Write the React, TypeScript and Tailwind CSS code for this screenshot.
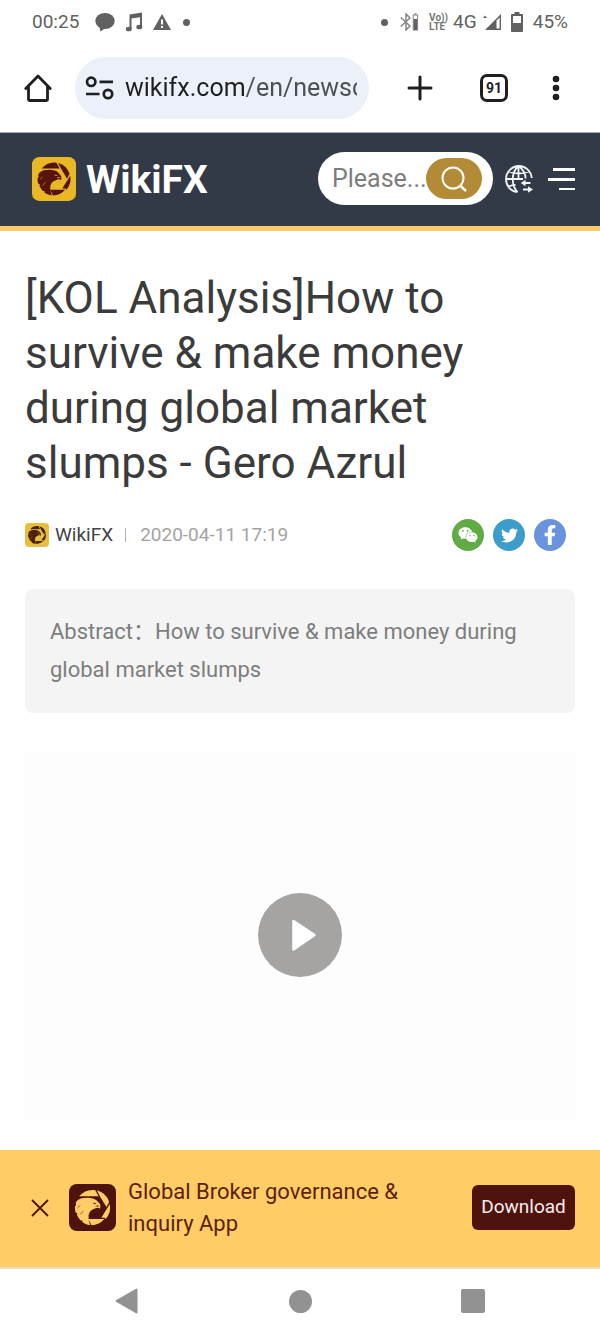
import { FaFacebookF, FaTwitter, FaWeixin } from "react-icons/fa";

type LogoProps = { className?: string; box: string; mark: string; label?: string };

function EagleLogo({ className, box, mark, label }: LogoProps) {
  return (
    <svg viewBox="0 0 48 48" className={className} role="img" aria-label={label ?? "WikiFX"}>
      <rect width="48" height="48" rx="8" fill={box} />
      <g fill={mark}>
        <path d="M10.5 12.6 A18 18 0 0 1 26.6 6.2 L30.2 12.6 Z" />
        <path d="M28.4 6.5 A18 18 0 0 1 41 18.4 L38.3 23.6 L32.4 14 Z" />
        <path d="M41.7 20.4 A18 18 0 0 1 37.4 35.8 L36.4 34.4 H33 Z" />
        <path d="M19.5 35.8 H36.2 A18 18 0 0 1 23 42 Z" />
        <path d="M7.5 17.8 C10 14.8 14 13.8 20 14 C25 14.2 28.6 16 30.2 19 C32 20 32.7 22.2 31.6 25.4 C30.4 23.9 28.5 24.1 26.6 25 C23 26 20.4 28.5 20 32 C19.8 36 20.4 39.5 21.8 42 C18 41.6 15.4 40.2 13.6 38.8 L13.6 37 L11.8 37.2 C9.8 35 8.7 33 8 31.2 L8.8 29.8 L7 29.4 C6 26.8 5.9 24.6 6.2 22.6 L7.6 21.2 L6.7 20.8 Z" />
      </g>
      <path d="M24.2 19 L28.4 19.8 L25.8 20.6 Z M26.6 22.7 C28 21.8 29.8 21.9 31.4 22.5 L28.6 23.1 Z" fill={box} />
      <path d="M14.6 27.5 L11.6 31.2 M11.6 21.8 L8.8 24.2" stroke={box} strokeWidth="0.6" fill="none" />
    </svg>
  );
}

function StatusBar() {
  return (
    <div className="flex h-11 items-center justify-between pr-8 pl-8 text-[19px] text-[#616161]">
      <div className="flex items-center">
        <span>00:25</span>
        <svg viewBox="0 0 20 20" className="ml-4 size-5" fill="currentColor" aria-hidden="true">
          <ellipse cx="10" cy="9" rx="9.7" ry="8" />
          <path d="M4 13 L5.5 19.5 L12 15 Z" />
        </svg>
        <svg viewBox="0 0 18 20" className="ml-2.5 h-5 w-[18px]" fill="currentColor" aria-hidden="true">
          <path d="M4.5 2.5 L17 0.5 V15 H15 V5.2 L6.5 6.6 V17 H4.5 Z" />
          <ellipse cx="3.8" cy="17" rx="3" ry="2.3" />
          <ellipse cx="14.3" cy="15" rx="3" ry="2.3" />
        </svg>
        <svg viewBox="0 0 18 16" className="ml-2.5 h-4 w-[18px]" fill="currentColor" aria-hidden="true">
          <path d="M9 0 L18 16 H0 Z" />
          <path d="M9 5.5 V10.5 M9 12 V14" stroke="#fff" strokeWidth="2" />
        </svg>
        <span className="ml-3 size-[7px] rounded-full bg-[#616161]" />
      </div>
      <div className="flex items-center">
        <span className="mr-3 size-[7px] rounded-full bg-[#616161]" />
        <svg viewBox="0 0 19 18" className="h-[18px] w-[19px]" fill="none" stroke="#858585" strokeWidth="1.5" aria-hidden="true">
          <path d="M0.8 4.5 L10 13 L6 17 V1 L10 5 L0.8 13.5" />
          <rect x="13.2" y="2" width="4.4" height="15" strokeWidth="1" />
          <path d="M15.4 6 V17" stroke="#616161" strokeWidth="3.6" />
          <path d="M14.5 1 H16.5" />
        </svg>
        <span className="ml-2.5 flex w-[18px] flex-col text-[10px] leading-[9px] font-bold text-[#777]">
          <span>Vo))</span>
          <span>LTE</span>
        </span>
        <span className="ml-1.5 text-[19px]">4G</span>
        <svg viewBox="0 0 18 16" className="ml-1.5 h-4 w-[18px]" fill="currentColor" aria-hidden="true">
          <path d="M18 0 V16 H2 Z" />
          <path d="M13.5 6.4 L16.6 3.4 V14.6 H13.5 Z" fill="#fff" />
          <path d="M0 4 L2 1.5 L4 4 Z" />
        </svg>
        <svg viewBox="0 0 12 20" className="ml-2.5 h-5 w-3" fill="currentColor" aria-hidden="true">
          <path d="M3.5 0 H8.5 V2 H11 Q12 2 12 3 V19 Q12 20 11 20 H1 Q0 20 0 19 V3 Q0 2 1 2 H3.5 Z" />
          <rect x="2" y="4" width="8" height="7" fill="#fff" />
        </svg>
        <span className="ml-2.5">45%</span>
      </div>
    </div>
  );
}

function BrowserBar() {
  return (
    <div className="flex h-[89px] items-center border-b border-[#a9adb3] pr-[39px] pl-6 text-[#1f1f1f]">
      <button aria-label="Home">
        <svg viewBox="0 0 28 28" className="size-7" fill="none" stroke="currentColor" strokeWidth="2.8" strokeLinejoin="round" strokeLinecap="round">
          <path d="M1.8 14.5 L14 2 L26.2 14.5 M4.5 12.5 V25.5 Q4.5 26.5 5.5 26.5 H22.5 Q23.5 26.5 23.5 25.5 V12.5" />
        </svg>
      </button>
      <div className="ml-[23px] flex h-[62px] min-w-0 flex-1 items-center rounded-full bg-[#ebf0f9] pr-3 pl-2.5">
        <svg viewBox="0 0 29 24" className="h-6 w-[29px] shrink-0" fill="none" stroke="currentColor" strokeWidth="2.7" aria-hidden="true">
          <circle cx="6.2" cy="5.8" r="4.2" />
          <path d="M14.5 5.8 H28 M1 18 H14.5" />
          <circle cx="23" cy="18" r="4.2" />
        </svg>
        <input
          aria-label="Web address"
          defaultValue="wikifx.com/en/newsc"
          className="ml-[11px] w-0 min-w-0 flex-1 bg-[linear-gradient(to_right,#1f1f1f_120px,#4b4f54_120px)] bg-clip-text text-[25px] text-transparent outline-none"
        />
      </div>
      <button aria-label="New tab" className="ml-[38px]">
        <svg viewBox="0 0 26 26" className="size-[26px]" stroke="currentColor" strokeWidth="3" strokeLinecap="round">
          <path d="M13 2 V24 M2 13 H24" />
        </svg>
      </button>
      <button aria-label="Open tabs" className="ml-[47px] flex size-7 items-center justify-center rounded-[7px] border-3 border-[#1f1f1f] text-sm leading-none font-bold">
        91
      </button>
      <button aria-label="Menu" className="ml-[43px]">
        <svg viewBox="0 0 10 28" className="h-7 w-2.5" fill="currentColor">
          <circle cx="5" cy="5" r="3.3" />
          <circle cx="5" cy="14" r="3.3" />
          <circle cx="5" cy="23" r="3.3" />
        </svg>
      </button>
    </div>
  );
}

function SiteHeader() {
  return (
    <header className="flex h-[98px] items-center border-b-5 border-[#fecb66] bg-[#323a48] pr-[25px] pb-0.5 pl-8">
      <a href="#home" className="flex items-center text-white">
        <EagleLogo className="size-11" box="#eab725" mark="#571509" />
        <span className="ml-2.5 pt-1 text-[39px] leading-none font-bold">WikiFX</span>
      </a>
      <form className="ml-auto flex h-[53px] w-[175px] items-center rounded-full bg-white pr-[11px] pl-3.5" onSubmit={(e) => e.preventDefault()}>
        <input aria-label="Search" placeholder="Please..." className="w-0 min-w-0 flex-1 text-[25px] text-[#757575] outline-none placeholder:text-[#7d7d7d]" />
        <button aria-label="Submit search" className="flex h-[41px] w-14 items-center justify-center rounded-full bg-[#b38a35]">
          <svg viewBox="0 0 26 26" className="size-[26px]" fill="none" stroke="#fff" strokeWidth="2">
            <circle cx="12" cy="12" r="10.5" />
            <path d="M19 19.5 L25 25" strokeWidth="2.4" />
          </svg>
        </button>
      </form>
      <button aria-label="Language" className="ml-3">
        <svg viewBox="0 0 28 28" className="size-7" fill="none" stroke="#f2f3f5" strokeWidth="1.8">
          <path d="M12.5 27 C5 26 1 20.5 1 14 C1 7 7 1 14 1 C20.5 1 26 6 26.8 13 M12.5 27 C6 20 6 7.5 13.5 1 C18.5 4.5 20.5 9 20.6 13.5 M13.5 1 V14 M3.6 6.5 Q14 10.5 24 6.5 M1 14 H18 M3.5 21.5 Q7 20 10.5 20" />
          <path d="M25.5 18 H19 M18 24.5 H24" strokeWidth="2" />
          <path d="M20.5 14.8 V21.2 L15.8 18 Z M23 21.3 V27.7 L28 24.5 Z" fill="#f2f3f5" stroke="none" />
        </svg>
      </button>
      <button aria-label="Site menu" className="ml-[15px] flex w-[27px] flex-col items-end gap-[7px]">
        <span className="h-[3px] w-[22px] bg-white" />
        <span className="h-[3px] w-full bg-white" />
        <span className="h-[2px] w-4 bg-white" />
      </button>
    </header>
  );
}

function Article() {
  return (
    <main className="flex-1 px-[25px] pt-10">
      <h1 className="text-[44px] leading-[55px] text-[#3b3b3b]">
        [KOL Analysis]How to survive &amp; make money during global market slumps - Gero Azrul
      </h1>
      <div className="mt-[26px] flex h-9 items-center pr-[9px] text-[19px]">
        <EagleLogo className="size-6" box="#e8bf3d" mark="#4b2308" />
        <span className="ml-1.5 text-[#444]">WikiFX</span>
        <span className="ml-3 h-3.5 w-px bg-[#b0b0b0]" />
        <time className="ml-3.5 text-[#a3a3a3]">2020-04-11 17:19</time>
        <div className="ml-auto flex gap-[9px] text-white">
          <a href="#wechat" aria-label="Share on WeChat" className="flex size-8 items-center justify-center rounded-full bg-[#5eac43]">
            <FaWeixin className="size-5" />
          </a>
          <a href="#twitter" aria-label="Share on Twitter" className="flex size-8 items-center justify-center rounded-full bg-[#3c9cca]">
            <FaTwitter className="size-[17px]" />
          </a>
          <a href="#facebook" aria-label="Share on Facebook" className="flex size-8 items-center justify-center rounded-full bg-[#6993dc]">
            <FaFacebookF className="size-5" />
          </a>
        </div>
      </div>
      <p className="mt-9 rounded-lg bg-[#f4f4f4] px-[25px] py-6 text-[22px] leading-[38px] text-[#7d7d7d]">
        Abstract：How to survive &amp; make money during global market slumps
      </p>
      <div className="mt-[39px] flex aspect-3/2 items-center justify-center bg-[#fdfdfd]">
        <button aria-label="Play video" className="size-[84px] rounded-full bg-[#a5a4a3]">
          <svg viewBox="0 0 84 84" className="size-full">
            <path d="M35.5 28 L56.5 42 L35.5 56.5 Z" fill="#fff" stroke="#fff" strokeWidth="2.5" strokeLinejoin="round" />
          </svg>
        </button>
      </div>
    </main>
  );
}

function DownloadBanner() {
  return (
    <aside className="flex h-[119px] items-center border-b-2 border-[#e8dcc0] bg-[#ffcc66] pr-[25px] pb-0.5 pl-[31px] text-[#5c1f0c]">
      <button aria-label="Close banner">
        <svg viewBox="0 0 18 18" className="size-[18px]" stroke="#4d150d" strokeWidth="1.8">
          <path d="M1 1 L17 17 M17 1 L1 17" />
        </svg>
      </button>
      <EagleLogo className="ml-5 size-[47px]" box="#4f130e" mark="#ffcc66" />
      <p className="ml-3 w-[290px] text-[22px] leading-8">Global Broker governance &amp; inquiry App</p>
      <button className="ml-auto h-[45px] w-[103px] rounded-md bg-[#4f130e] text-[19px] text-[#f7ecec]">Download</button>
    </aside>
  );
}

function SystemNav() {
  return (
    <nav className="flex h-16 items-center justify-between pr-[115px] pl-[115px] text-[#929292]">
      <button aria-label="Back">
        <svg viewBox="0 0 24 26" className="h-[26px] w-6" fill="currentColor" stroke="currentColor" strokeWidth="2" strokeLinejoin="round">
          <path d="M1.5 13 L21.5 1.5 V24.5 Z" />
        </svg>
      </button>
      <button aria-label="Home screen" className="size-[23px] rounded-full bg-[#929292]" />
      <button aria-label="Recent apps" className="size-6 rounded-xs bg-[#929292]" />
    </nav>
  );
}

export default function App() {
  return (
    <div className="flex min-h-screen flex-col bg-white font-[Roboto,'Noto_Sans_CJK_SC',sans-serif]">
      <StatusBar />
      <BrowserBar />
      <SiteHeader />
      <Article />
      <DownloadBanner />
      <SystemNav />
    </div>
  );
}
